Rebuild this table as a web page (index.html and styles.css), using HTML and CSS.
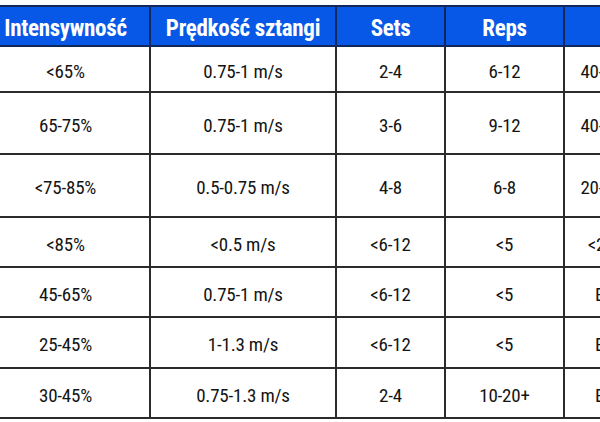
FILE: index.html
```html
<!DOCTYPE html>
<html lang="pl">
<head>
<meta charset="utf-8">
<title>Intensywność</title>
<link rel="stylesheet" href="styles.css">
</head>
<body>
<div class="viewport">
  <table class="grid">
    <colgroup>
      <col class="c-int">
      <col class="c-vel">
      <col class="c-sets">
      <col class="c-reps">
      <col class="c-rest">
    </colgroup>
    <thead>
      <tr class="head">
        <th>Intensywność</th>
        <th>Prędkość sztangi</th>
        <th>Sets</th>
        <th>Reps</th>
        <th>Rest</th>
      </tr>
    </thead>
    <tbody>
      <tr class="r1"><td>&lt;65%</td><td>0.75-1 m/s</td><td>2-4</td><td>6-12</td><td>40-60 sekund</td></tr>
      <tr class="r2"><td>65-75%</td><td>0.75-1 m/s</td><td>3-6</td><td>9-12</td><td>40-60 sekund</td></tr>
      <tr class="r3"><td>&lt;75-85%</td><td>0.5-0.75 m/s</td><td>4-8</td><td>6-8</td><td>20-40 sekund</td></tr>
      <tr class="r4"><td>&lt;85%</td><td>&lt;0.5 m/s</td><td>&lt;6-12</td><td>&lt;5</td><td>&lt;20 sekund</td></tr>
      <tr class="r5"><td>45-65%</td><td>0.75-1 m/s</td><td>&lt;6-12</td><td>&lt;5</td><td>Explosive</td></tr>
      <tr class="r6"><td>25-45%</td><td>1-1.3 m/s</td><td>&lt;6-12</td><td>&lt;5</td><td>Explosive</td></tr>
      <tr class="r7"><td>30-45%</td><td>0.75-1.3 m/s</td><td>2-4</td><td>10-20+</td><td>Explosive</td></tr>
    </tbody>
  </table>
</div>
</body>
</html>
```
FILE: styles.css
```css
html, body {
  margin: 0;
  padding: 0;
  background: #ffffff;
  overflow: hidden;
}

.viewport {
  width: 600px;
  height: 422px;
  overflow: hidden;
}

.grid {
  margin-top: 5px;
  margin-left: -20px;
  border-collapse: collapse;
  table-layout: fixed;
  width: 714px;
  font-family: "Roboto Condensed", "Liberation Sans Narrow", Roboto, sans-serif;
  font-stretch: condensed;
  color: #141414;
}

.c-int { width: 169px; }
.c-vel { width: 186px; }
.c-sets { width: 109px; }
.c-reps { width: 119px; }
.c-rest { width: 131px; }

.grid th,
.grid td {
  text-align: center;
  vertical-align: middle;
  white-space: nowrap;
  padding: 4px 0 0 0;
}

.grid td {
  border: 2px solid #2b2b2b;
  font-size: 19px;
  letter-spacing: -0.2px;
}

.grid th {
  background: #0758e6;
  color: #ffffff;
  font-weight: 700;
  font-size: 23px;
  letter-spacing: -0.3px;
  border: 2px solid #13285a;
}

.head { height: 40px; }
.r1 { height: 46px; }
.r2 { height: 62px; }
.r3 { height: 63px; }
.r4 { height: 50px; }
.r5 { height: 50px; }
.r6 { height: 51px; }
.r7 { height: 50px; }
```
